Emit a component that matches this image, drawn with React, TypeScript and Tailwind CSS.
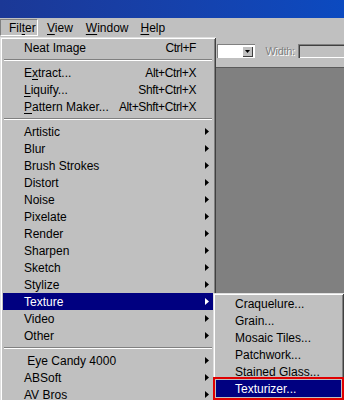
import React from "react";

const Arrow = ({ white }: { white?: boolean }) => (
  <svg width="4" height="7" viewBox="0 0 4 7" className="block">
    <polygon points="0,0 4,3.5 0,7" fill={white ? "#fff" : "#000"} />
  </svg>
);

type It = { l: React.ReactNode; s?: string; sub?: boolean; hi?: boolean; sep?: boolean };

const U = ({ c }: { c: string }) => <span className="underline underline-offset-[2px]">{c}</span>;

const items: It[] = [
  { l: "Neat Image", s: "Ctrl+F" },
  { sep: true, l: "" },
  { l: <>E<U c="x" />tract...</>, s: "Alt+Ctrl+X" },
  { l: <><U c="L" />iquify...</>, s: "Shft+Ctrl+X" },
  { l: <><U c="P" />attern Maker...</>, s: "Alt+Shft+Ctrl+X" },
  { sep: true, l: "" },
  { l: "Artistic", sub: true },
  { l: "Blur", sub: true },
  { l: "Brush Strokes", sub: true },
  { l: "Distort", sub: true },
  { l: "Noise", sub: true },
  { l: "Pixelate", sub: true },
  { l: "Render", sub: true },
  { l: "Sharpen", sub: true },
  { l: "Sketch", sub: true },
  { l: "Stylize", sub: true },
  { l: "Texture", sub: true, hi: true },
  { l: "Video", sub: true },
  { l: "Other", sub: true },
  { sep: true, l: "" },
  { l: "\u00a0Eye Candy 4000", sub: true },
  { l: "ABSoft", sub: true },
  { l: "AV Bros", sub: true },
];

const subItems = ["Craquelure...", "Grain...", "Mosaic Tiles...", "Patchwork...", "Stained Glass..."];

const frame =
  "shadow-[inset_1px_1px_0_#dfdfdf,inset_-1px_-1px_0_#404040,inset_2px_2px_0_#ffffff,inset_-2px_-2px_0_#808080]";

export default function App() {
  return (
    <div className="relative w-[344px] h-[400px] overflow-hidden bg-[#c0c0c0] font-['Liberation_Sans',Arial,sans-serif] text-[12px] text-black leading-none">
      {/* title bar */}
      <div className="h-[18px] bg-linear-to-r from-[#1b3896] to-[#0b4ac0]" />
      {/* menu bar */}
      <div className="h-[19px] flex items-center">
        <div className="h-[17px] w-[38px] flex items-center pl-[8px] border-t border-l border-[#808080] border-b border-r border-b-white border-r-white">
          Fil<U c="t" />er
        </div>
        <div className="ml-[9px]"><U c="V" />iew</div>
        <div className="ml-[13px]"><U c="W" />indow</div>
        <div className="ml-[12px]"><U c="H" />elp</div>
      </div>
      {/* options bar */}
      <div className="h-[30px] flex items-center pl-[217px] pb-[2px]">
        <div className="w-[42px] h-[14px] bg-white flex justify-end items-center pr-[2px] shadow-[inset_1px_1px_0_#808080,inset_-1px_-1px_0_#ffffff]">
          <div className="w-[11px] h-[11px] bg-[#c0c0c0] flex items-center justify-center shadow-[inset_1px_1px_0_#fff,inset_-1px_-1px_0_#404040]">
            <svg width="5" height="3" viewBox="0 0 5 3"><polygon points="0,0 5,0 2.5,3" fill="#000" /></svg>
          </div>
        </div>
        <div className="ml-[10px] w-[28px] text-[11px] tracking-[-0.3px] text-[#808080] [text-shadow:1px_1px_0_#fff]">Width:</div>
        <div className="ml-[5px] w-[50px] h-[14px] bg-[#c0c0c0] shadow-[inset_1px_1px_0_#808080,inset_2px_2px_0_#404040,inset_0_-1px_0_#ffffff]" />
      </div>
      {/* canvas */}
      <div className="h-[333px] bg-[#808080] border-t border-[#5a5a5a]" />

      {/* Filter dropdown */}
      <div className={`absolute left-0 top-[37px] w-[216px] h-[380px] bg-[#c0c0c0] pt-[2px] px-[3px] ${frame}`}>
        {items.map((it, i) =>
          it.sep ? (
            <div key={i} className="h-[8px] pt-[3px] px-[1px]">
              <div className="h-[1px] bg-[#808080]" />
              <div className="h-[1px] bg-white" />
            </div>
          ) : (
            <div
              key={i}
              className={`h-[17px] flex items-center pl-[21px] pr-[4px] ${it.hi ? "bg-[#000080] text-white" : ""}`}
            >
              <span className="flex-1 whitespace-pre">{it.l}</span>
              {it.s && <span className="mr-[13px] tracking-[-0.4px]">{it.s}</span>}
              {it.sub && <Arrow white={it.hi} />}
            </div>
          )
        )}
      </div>

      {/* Texture submenu */}
      <div className={`absolute left-[213px] top-[293px] w-[131px] h-[120px] bg-[#c0c0c0] pt-[2px] px-[3px] ${frame}`}>
        {subItems.map((s) => (
          <div key={s} className="h-[17px] flex items-center pl-[19px]">
            {s}
          </div>
        ))}
        <div className="h-[17px] flex items-center pl-[19px] bg-[#000080] text-white">Texturizer...</div>
      </div>
      {/* red annotation box */}
      <div className="absolute left-[213px] top-[377px] w-[131px] h-[23px] border-2 border-[#e00000]" />
    </div>
  );
}
